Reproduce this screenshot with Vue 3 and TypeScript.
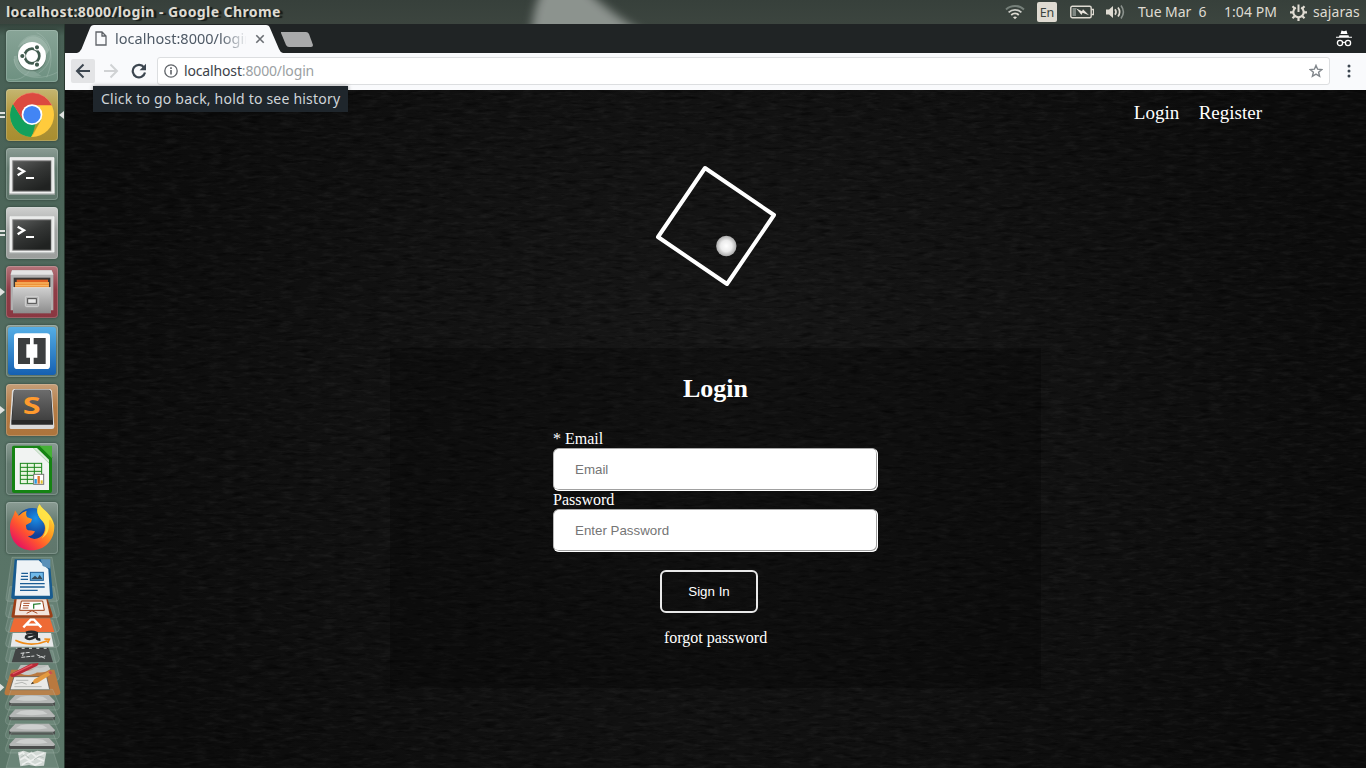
<script setup lang="ts">
import { ref } from 'vue'

interface Field {
  id: string
  label: string
  placeholder: string
  type: string
}

const pageUrl = { host: 'localhost', rest: ':8000/login' }
const navLinks: string[] = ['Login', 'Register']
const fields: Field[] = [
  { id: 'email', label: '* Email', placeholder: 'Email', type: 'email' },
  { id: 'password', label: 'Password', placeholder: 'Enter Password', type: 'password' },
]
const values = ref<Record<string, string>>({ email: '', password: '' })
const drives: number[] = [0, 1, 2, 3]
</script>

<template>
  <div class="desktop">
    <header class="panel">
      <svg class="wallpaper" width="180" height="24" viewBox="0 0 180 24">
        <filter id="soft" x="-20%" y="-50%" width="140%" height="200%">
          <feGaussianBlur stdDeviation="5" />
        </filter>
        <path d="M44 -12C36 0 33 14 31 38H152C122 20 105 8 84 -12Z" fill="#8c938e" filter="url(#soft)" />
      </svg>
      <div class="panel-title">localhost:8000/login - Google Chrome</div>
      <div class="indicators">
        <svg class="wifi" width="20" height="16" viewBox="0 0 20 16" fill="none" stroke-width="1.8">
          <path d="M1 5.5C6 .8 14 .8 19 5.5" stroke="#76807a" />
          <path d="M3.6 8.4C7.4 5 12.6 5 16.4 8.4" stroke="#cfd0ca" />
          <path d="M6.2 11C8.5 9 11.5 9 13.8 11" stroke="#dfdbd2" />
          <path d="M8 13.2L10 15.2L12 13.2Q10 11.8 8 13.2Z" fill="#dfdbd2" />
        </svg>
        <span class="keyboard">En</span>
        <svg class="battery" width="24" height="14" viewBox="0 0 24 14">
          <rect x=".8" y="1.3" width="20.4" height="11.4" rx="1.5" fill="none" stroke="#dfdbd2" stroke-width="1.4" />
          <path d="M21.5 4.5h2v5h-2" fill="none" stroke="#dfdbd2" stroke-width="1.3" />
          <rect x="2.5" y="3" width="3.5" height="8" fill="#7f8782" />
          <path d="M6 3.2L12 6.3L13 4.2L19 10.2L12.6 7.8L11.5 9.9Z" fill="#e8e4dc" />
        </svg>
        <svg class="sound" width="20" height="16" viewBox="0 0 20 16" fill="none">
          <path d="M0 5.5h3L7 2v12L3 10.5H0Z" fill="#dfdbd2" />
          <path d="M9 5.3q2 2.7 0 5.4" stroke="#dfdbd2" stroke-width="1.7" />
          <path d="M12 3.5q3.3 4.5 0 9" stroke="#dfdbd2" stroke-width="1.7" />
          <path d="M15 1.5q4.800 6.500 0 13" stroke="#8a918c" stroke-width="1.6" />
        </svg>
        <span class="date">Tue Mar&nbsp; 6</span>
        <span class="time">1:04 PM</span>
        <svg class="gear" width="17" height="18" viewBox="0 0 17 18" fill="none" stroke="#dfdbd2">
          <path d="M5.8 4.6A5.2 5.2 0 1 0 11.2 4.6" stroke-width="2.1" />
          <path d="M8.5 1.5V9" stroke-width="2" />
          <path d="M0 9.3h3M14 9.3h3M2.5 3.2L4.8 5.5M14.5 3.2L12.2 5.5M2.5 15.3L4.8 13M14.5 15.3L12.2 13M8.5 15v3" stroke-width="2.2" />
        </svg>
        <span class="user">sajaras</span>
      </div>
    </header>

    <div class="workspace">
      <aside class="launcher">
        <div class="tile tile-dash">
          <svg viewBox="18 18 156 156">
            <g fill="none" stroke="#b9cdc2" stroke-opacity=".45" stroke-width="2">
              <path d="M55 70C72 25 130 20 150 75C155 105 143 130 115 148" />
              <path d="M42 105C48 160 112 175 172 145" />
              <path d="M110 26C155 45 164 105 140 160" />
              <path d="M22 165C55 172 75 160 90 138" />
            </g>
            <path d="M57 69C78 22 132 28 148 78L137 95C133 60 90 40 57 69Z" fill="#c9d9d0" opacity=".35" />
            <path d="M42 96C36 130 72 168 125 156L97 138C70 138 53 120 51 95Z" fill="#c9d9d0" opacity=".25" />
            <circle cx="96" cy="99" r="43" fill="#42594e" opacity=".4" />
            <circle cx="96" cy="96" r="42" fill="#fff" />
            <circle cx="96" cy="96" r="22" fill="none" stroke="#405a4e" stroke-width="8" />
            <g fill="#405a4e" stroke="#fff" stroke-width="3.5">
              <circle cx="67" cy="96" r="8" />
              <circle cx="111" cy="70" r="8" />
              <circle cx="111" cy="122" r="8" />
            </g>
          </svg>
        </div>
        <div class="tile tile-chrome">
          <i class="mark left double"></i>
          <i class="mark right"></i>
          <svg viewBox="18 195 156 156">
            <circle cx="96" cy="273" r="66" fill="#ffcb3c" />
            <path d="M39 240A66 66 0 0 0 93 339L124 286L96 272L68 286Z" fill="#12a05c" />
            <path d="M39 240A66 66 0 0 1 156 244H96L68 288Z" fill="#dc4a3f" />
            <path d="M39 240A66 66 0 0 1 156 244" fill="none" stroke="#f0867c" stroke-width="2" opacity=".7" />
            <path d="M96 339L124 287L106 300Z" fill="#d89b20" opacity=".7" />
            <circle cx="96" cy="272" r="31" fill="#fff" />
            <circle cx="96" cy="272" r="26" fill="#4285f4" />
          </svg>
        </div>
        <div v-for="n in 2" :key="n" class="tile" :class="n === 1 ? 'tile-plain' : 'tile-active'">
          <i v-if="n === 2" class="mark left double"></i>
          <svg viewBox="18 372 156 156">
            <defs>
              <linearGradient id="screen" x2=".6" y2="1">
                <stop offset="0" stop-color="#5a5c5b" />
                <stop offset=".5" stop-color="#353736" />
                <stop offset="1" stop-color="#202221" />
              </linearGradient>
            </defs>
            <path d="M31 399H161L165 512H27Z" fill="#a9adab" />
            <path d="M30 401H162V507H30Z" fill="#e8e9e8" stroke="#fff" stroke-width="2" />
            <rect x="37" y="409" width="117" height="94" fill="#777" />
            <rect x="40" y="412" width="112" height="88" fill="url(#screen)" />
            <path d="M53 431L72 442L53 454" fill="none" stroke="#fff" stroke-width="7" />
            <path d="M78 462H102" stroke="#fff" stroke-width="6" />
          </svg>
        </div>
        <div class="tile tile-files">
          <i class="mark left"></i>
          <svg viewBox="18 198 156 156">
            <defs>
              <linearGradient id="cabinet" x2="0" y2="1">
                <stop offset="0" stop-color="#d0d0d0" />
                <stop offset="1" stop-color="#8c8c8c" />
              </linearGradient>
            </defs>
            <path d="M36 211H155L160 222V331H32V222Z" fill="#b0b0b0" />
            <path d="M36 211H155L160 224H32Z" fill="#e4e4e4" />
            <rect x="41" y="233" width="110" height="34" fill="#3a3634" />
            <rect x="50" y="239" width="94" height="10" fill="#e05f22" />
            <rect x="45" y="246" width="102" height="22" fill="#ee9238" />
            <path d="M46 249H146M46 257H146" stroke="#ffd08a" stroke-width="2" />
            <rect x="39" y="262" width="114" height="78" fill="url(#cabinet)" />
            <path d="M39 263H153" stroke="#e9e9e9" stroke-width="2" />
            <rect x="76" y="289" width="40" height="31" rx="4" fill="#b5b5b5" stroke="#d8d8d8" stroke-width="2.5" />
            <rect x="83" y="296" width="26" height="14" fill="#e7e7e7" stroke="#4b4b4b" stroke-width="3" />
          </svg>
        </div>
        <div class="tile tile-plain">
          <svg viewBox="18 375 156 156">
            <defs>
              <linearGradient id="brackets" x2="0" y2="1">
                <stop offset="0" stop-color="#55aee5" />
                <stop offset="1" stop-color="#1560b2" />
              </linearGradient>
            </defs>
            <rect x="24" y="381" width="144" height="144" rx="9" fill="url(#brackets)" />
            <rect x="42" y="400" width="108" height="107" rx="10" fill="#fff" />
            <path d="M54 414H90V433H79V473H90V492H54ZM137 414H101V433H112V473H101V492H137Z" fill="#3c3e3f" />
          </svg>
        </div>
        <div class="tile tile-sublime">
          <i class="mark left"></i>
          <svg viewBox="18 12 156 156">
            <defs>
              <linearGradient id="key" x2="0" y2="1">
                <stop offset="0" stop-color="#6c6c6c" />
                <stop offset="1" stop-color="#404040" />
              </linearGradient>
            </defs>
            <path d="M41 27H151L156 32L163 140Q163 147 156 147H35Q28 147 29 140L36 32Z" fill="#dadada" />
            <path d="M45 29H148L153 34L159 125V134H34V125L41 34Z" fill="#292929" />
            <path d="M45 30H148L152 34L157 120H36L42 34Z" fill="url(#key)" />
            <text class="key-letter" transform="translate(95 101) scale(1.35 1)" text-anchor="middle">S</text>
          </svg>
        </div>
        <div class="tile tile-plain">
          <svg viewBox="18 189 156 156">
            <path d="M41 197H122L156 232V333Q156 339 150 339H42Q36 339 36 333V203Q36 197 41 197Z" fill="#158313" />
            <path d="M45 204H100L147 250V330H45Z" fill="#f1f3f2" />
            <path d="M118 197H156V235Z" fill="#45b136" />
            <path d="M100 204L147 250V239L111 204Z" fill="#dce9dc" />
            <rect x="61" y="250" width="64" height="61" fill="#e8f5df" stroke="#19841a" stroke-width="3" />
            <path d="M61 262H125M61 274H125M61 286H125M61 298H125M82 250V311M103 250V311" stroke="#19841a" stroke-width="3" />
            <rect x="101" y="283" width="30" height="30" fill="#fff" stroke="#777" stroke-width="3" />
            <path d="M107 311V297" stroke="#2b9be0" stroke-width="7" />
            <path d="M116 311V288" stroke="#e0732b" stroke-width="7" />
            <path d="M125 311V301" stroke="#e0c02b" stroke-width="6" />
          </svg>
        </div>
        <div class="tile tile-plain">
          <svg viewBox="18 366 156 156">
            <defs>
              <linearGradient id="fox" x1=".9" y1=".1" x2=".2" y2=".9">
                <stop offset="0" stop-color="#ffe33b" />
                <stop offset=".4" stop-color="#ff9a1f" />
                <stop offset=".7" stop-color="#ff5230" />
                <stop offset="1" stop-color="#e8175d" />
              </linearGradient>
              <radialGradient id="globe" cx=".6" cy=".3">
                <stop offset="0" stop-color="#1a90e8" />
                <stop offset="1" stop-color="#123f97" />
              </radialGradient>
            </defs>
            <circle cx="97" cy="435" r="51" fill="url(#globe)" />
            <path d="M45 391L56 407Q68 395 80 392Q76 404 82 412L96 417L93 427L78 435Q77 446 84 451Q94 451 105 454Q98 470 83 468Q99 483 120 472C139 459 139 433 125 421C108 401 109 386 119 373C124 388 157 401 163 436C164 483 133 511 96 511C51 510 29 477 30 440C31 417 42 410 45 391Z" fill="url(#fox)" />
            <path d="M119 373C124 388 157 401 160 436C155 416 145 411 147 431C148 455 139 466 125 476C145 447 137 433 125 421C108 401 109 386 119 373Z" fill="#ffe84a" opacity=".85" />
          </svg>
        </div>

        <svg class="folded" viewBox="0 0 195 654">
          <g stroke="#b7c7be" stroke-opacity=".4" stroke-width="2" fill="#b0c3b9" fill-opacity=".16">
            <path d="M36 22H156L176 145Q176 154 168 154H24Q17 153 18 145Z" />
            <path d="M30 110H162L178 190Q178 203 167 203H27Q16 202 17 190Z" />
            <path d="M34 165H158L178 235Q177 247 167 247H27Q16 246 17 235Z" />
            <path d="M34 210H158L178 280Q177 292 167 292H27Q16 291 17 280Z" />
            <path d="M34 252H158L178 326Q177 338 167 338H27Q16 337 17 326Z" />
            <path d="M34 302H158L178 380Q177 392 167 392H27Q16 391 17 380Z" />
          </g>
          <path d="M44 28H128L151 50L159 139Q159 147 152 147H40Q32 147 34 139Z" fill="#185b8f" />
          <path d="M51 31H116L145 58L150 137H44Z" fill="#eef3f6" />
          <path d="M122 28L151 28V56L128 48Z" fill="#5a90b8" />
          <path d="M64 70H84M63 79H84M62 88H84M60 101H134M60 111H134M60 121H113" stroke="#1c5d95" stroke-width="4" />
          <rect x="91" y="67" width="39" height="24" fill="#6fb9e9" stroke="#1c5d95" stroke-width="3" />
          <path d="M93 88L105 77L113 84L119 74L128 88Z" fill="#374955" />
          <path d="M43 148H143L158 195Q159 203 153 203H38Q33 203 35 195Z" fill="#9b3f17" />
          <path d="M50 148H139L149 196H44Z" fill="#f2e4dc" />
          <path d="M64 153H128L133 181H59Z" fill="#fff" stroke="#9b3f17" stroke-width="3" />
          <path d="M70 160H89M69 167H87M68 174H85M80 190L96 182L112 190" stroke="#a94a24" stroke-width="3" fill="none" />
          <path d="M101 176V163L122 161" stroke="#30833a" stroke-width="4" fill="none" />
          <path d="M42 205H150L163 246H29Z" fill="#ee6a35" />
          <path d="M70 232L92 209H102L124 232M78 224H115" fill="none" stroke="#fff" stroke-width="7" />
          <path d="M38 249H153L161 290H32Z" fill="#e7e9e9" />
          <path d="M78 248Q96 242 110 249V262Q111 270 121 268M109 254Q78 251 78 263Q88 273 108 258" fill="none" stroke="#25292b" stroke-width="8" />
          <path d="M46 271Q92 293 143 272M133 267L148 268L143 279" fill="none" stroke="#ef8c19" stroke-width="5" />
          <path d="M47 297H147L159 337H35Z" fill="#414444" />
          <path d="M49 295H146" stroke="#bbb" stroke-width="4" />
          <path d="M52 295H146" stroke="#333" stroke-width="4" stroke-dasharray="13 9" />
          <path d="M62 310L91 307M70 308L68 318M64 322L103 318M110 314L135 325M116 322L136 318" stroke="#d6d8d8" stroke-width="3" stroke-dasharray="12 3" />
          <path d="M62 345H145L157 388H35Z" fill="#b9bcba" />
          <path d="M34 359H163L181 427Q181 436 170 436H21Q12 435 14 425Z" fill="#b9793f" />
          <path d="M42 380H140L149 419H30Z" fill="#e9e9e6" stroke="#4a4e4c" stroke-width="2" />
          <path d="M62 364Q91 374 110 360Q132 364 147 351" stroke="#c6cac8" stroke-width="13" fill="none" />
          <path d="M31 373L92 341L116 339L112 347L43 380Q29 383 31 373Z" fill="#b82937" />
          <path d="M38 372L97 344" stroke="#e35a63" stroke-width="4" />
          <path d="M93 403L103 388L148 363L156 371L112 399Z" fill="#e39a3f" />
          <path d="M93 403L97 396L103 400Z" fill="#333" />
          <path d="M145 366L151 362L158 370L151 374Z" fill="#c95050" />
          <path d="M48 391H85M44 402L66 397L80 403M43 410H125" stroke="#9b9e9b" stroke-width="2" fill="none" />
          <g v-for="n in drives" :key="n" :transform="`translate(0 ${n * 43})`">
            <path d="M34 418H158L178 465Q179 480 169 480H25Q15 479 17 465Z" fill="#b0c3b9" fill-opacity=".12" stroke="#b7c7be" stroke-opacity=".4" stroke-width="2" />
            <path d="M46 436H147L165 456V465Q165 468 160 468H32Q27 468 27 463V456Z" fill="#494c4b" />
            <path d="M46 435H147L165 454Q165 459 160 459H31Q27 458 28 454Z" fill="#b4b6b5" />
            <path d="M62 440Q93 434 129 440L143 449Q95 456 47 449Z" fill="#cdcfce" />
          </g>
          <path d="M34 598H158L176 654H18Z" fill="#b0c3b9" fill-opacity=".2" stroke="#b7c7be" stroke-opacity=".4" stroke-width="2" />
          <path d="M54 607L71 602L92 609L112 602L139 607L132 647L108 649L87 645L61 649Z" fill="#d2d9d5" />
          <path d="M56 614L68 607L78 619L94 608L108 620L133 609M60 630L74 622L92 633L109 623L132 633M66 644L84 634L105 645L125 636" fill="none" stroke="#fff" stroke-width="5" opacity=".6" />
          <path d="M62 622L75 614L87 624M102 629L119 619L131 623M77 641L91 642" fill="none" stroke="#b5beba" stroke-width="3" />
          <path d="M0 401L13 412L0 424Z" fill="#dfe2df" />
        </svg>
      </aside>

      <main class="browser">
        <div class="tabstrip">
          <svg class="tab-shape" width="236" height="29" viewBox="0 0 236 29">
            <path d="M0 29Q3 28 4.5 25L13 4Q14 1 17 1H189Q192 1 193 4L202 25Q203 28 206 29Z" fill="#f9fafc" />
            <path d="M204 8H229Q231 8 232 10L236 21Q236 23 234 23H212Q210 23 209 21L204 9Z" fill="#a9aaab" />
          </svg>
          <div class="tab">
            <svg width="12" height="15" viewBox="0 0 12 15" fill="none" stroke="#5f6368" stroke-width="1.3">
              <path d="M1 1H7L11 5V14H1ZM7 1V5H11" />
            </svg>
            <span class="tab-title">localhost:8000/login</span>
            <svg class="close" width="10" height="10" viewBox="0 0 10 10" stroke="#6a6e73" stroke-width="1.6">
              <path d="M1.3 1.3L8.7 8.7M8.7 1.3L1.3 8.7" />
            </svg>
          </div>
          <svg class="incognito" width="16" height="17" viewBox="0 0 16 17" fill="none" stroke="#fff">
            <path d="M4.5 4L5.5 .5L8 1.2L10.5 .5L11.5 4Z" fill="#fff" stroke="none" />
            <path d="M3.5 5.3H12.5L13 6.7H16V7.8H0V6.7H3Z" fill="#fff" stroke="none" />
            <circle cx="4" cy="13" r="2.6" stroke-width="1.3" />
            <circle cx="12" cy="13" r="2.6" stroke-width="1.3" />
            <path d="M6.6 12.6Q8 11.9 9.4 12.6" stroke-width="1.2" />
          </svg>
        </div>

        <div class="toolbar">
          <span class="tool back">
            <svg width="16" height="16" viewBox="0 0 16 16" fill="none" stroke="#3c4650" stroke-width="2">
              <path d="M15 8H2.5M8.5 1.5L2 8L8.5 14.5" />
            </svg>
          </span>
          <svg class="forward" width="16" height="16" viewBox="0 0 16 16" fill="none" stroke="#d0d2d4" stroke-width="2">
            <path d="M1 8H13.5M7.5 1.5L14 8L7.5 14.5" />
          </svg>
          <svg class="reload" width="16" height="16" viewBox="0 0 16 16" fill="none">
            <path d="M13 4.5A6.2 6.2 0 1 0 14 9.5" stroke="#3c4650" stroke-width="2.2" />
            <path d="M15 .8V7.2H8.6Z" fill="#3c4650" />
          </svg>
          <div class="omnibox">
            <svg width="14" height="14" viewBox="0 0 14 14" fill="none" stroke="#5f6368">
              <circle cx="7" cy="7" r="6.2" stroke-width="1.3" />
              <path d="M7 6V10.5M7 3.3V4.9" stroke-width="1.6" />
            </svg>
            <span class="url">{{ pageUrl.host }}<span class="rest">{{ pageUrl.rest }}</span></span>
            <svg class="star" width="14" height="14" viewBox="0 0 14 14" fill="none" stroke="#80868b" stroke-width="1.4">
              <path d="M7 1.4L8.6 5.2L12.8 5.5L9.6 8.2L10.6 12.3L7 10.1L3.4 12.3L4.4 8.2L1.2 5.5L5.4 5.2Z" />
            </svg>
          </div>
          <svg class="menu" width="4" height="14" viewBox="0 0 4 14" fill="#3c4650">
            <circle cx="2" cy="2" r="1.5" />
            <circle cx="2" cy="7" r="1.5" />
            <circle cx="2" cy="12" r="1.5" />
          </svg>
          <div class="tooltip">Click to go back, hold to see history</div>
        </div>

        <section class="page">
          <svg class="leather" width="1301" height="678">
            <filter id="grain" x="0" y="0" width="100%" height="100%" color-interpolation-filters="sRGB">
              <feTurbulence type="fractalNoise" baseFrequency=".07 .28" numOctaves="3" seed="8" />
              <feColorMatrix values="0 0 0 0 .45  0 0 0 0 .45  0 0 0 0 .45  .25 0 0 0 -.12" />
            </filter>
            <filter id="creases" x="0" y="0" width="100%" height="100%" color-interpolation-filters="sRGB">
              <feTurbulence type="fractalNoise" baseFrequency=".06 .3" numOctaves="3" seed="21" />
              <feColorMatrix values="0 0 0 0 0  0 0 0 0 0  0 0 0 0 0  1.3 0 0 0 -.65" />
            </filter>
            <rect width="1301" height="678" filter="url(#grain)" />
            <rect width="1301" height="678" filter="url(#creases)" />
          </svg>
          <nav class="nav">
            <a v-for="link in navLinks" :key="link">{{ link }}</a>
          </nav>
          <svg class="logo" width="124" height="124" viewBox="0 0 124 124">
            <defs>
              <radialGradient id="ball">
                <stop offset="0" stop-color="#fff" />
                <stop offset=".55" stop-color="#ececec" />
                <stop offset="1" stop-color="#a9a9a9" />
              </radialGradient>
            </defs>
            <path d="M51 4L120 51L73 120L4 73Z" fill="none" stroke="#fff" stroke-width="4" stroke-linejoin="round" />
            <circle cx="72.3" cy="82" r="10.2" fill="url(#ball)" />
          </svg>
          <form class="card" @submit.prevent>
            <h2>Login</h2>
            <div class="fields">
              <template v-for="f in fields" :key="f.id">
                <label :for="f.id">{{ f.label }}</label>
                <input :id="f.id" v-model="values[f.id]" :type="f.type" :placeholder="f.placeholder" />
              </template>
            </div>
            <button type="submit">Sign In</button>
            <a class="forgot">forgot password</a>
          </form>
        </section>
      </main>
    </div>
  </div>
</template>

<style>
body {
  margin: 0;
  overflow: hidden;
}
</style>

<style scoped>
.desktop {
  width: 1366px;
  height: 768px;
  display: flex;
  flex-direction: column;
  overflow: hidden;
  background: #000;
  font-family: "Noto Sans", "Open Sans", sans-serif;
}
.panel {
  position: relative;
  height: 24px;
  flex: none;
  display: flex;
  align-items: center;
  justify-content: space-between;
  padding: 0 5px 0 6px;
  box-sizing: border-box;
  color: #dfdbd2;
  background: linear-gradient(#37403b, #3c453f);
}
.wallpaper {
  position: absolute;
  left: 500px;
  top: 0;
}
.panel-title {
  position: relative;
  font-weight: 700;
  font-size: 14px;
  line-height: 24px;
  letter-spacing: .42px;
  white-space: nowrap;
  text-shadow: 3px 1px 1px #161b18;
}
.indicators {
  position: relative;
  display: flex;
  align-items: center;
  height: 24px;
  font-size: 14px;
  line-height: 24px;
  white-space: nowrap;
}
.keyboard {
  width: 20px;
  height: 20px;
  margin-left: 12px;
  border-radius: 2px;
  background: #dfdbd2;
  color: #3c453f;
  font-size: 12.5px;
  line-height: 21px;
  text-align: center;
}
.battery { margin-left: 13px; }
.sound { margin-left: 12px; }
.date { margin-left: 12px; width: 86px; letter-spacing: -.05px; }
.time { width: 66px; letter-spacing: .05px; }
.user { margin-left: 6px; width: 48px; letter-spacing: .1px; }
.workspace {
  display: flex;
  flex: 1;
  min-height: 0;
}
.launcher {
  width: 65px;
  box-sizing: border-box;
  flex: none;
  display: flex;
  flex-direction: column;
  align-items: flex-start;
  gap: 7px;
  padding: 6px 0 0 6px;
  border-right: 1px solid #28382f;
  background: linear-gradient(#33423b 0, #486055 12px, #4c6559 180px, #587366 450px, #5b7668 744px);
}
.tile {
  position: relative;
  flex: none;
  width: 52px;
  height: 52px;
  box-sizing: border-box;
  border-radius: 4px;
  box-shadow: 0 0 2px 1px rgba(25, 40, 32, .3), inset 0 0 0 1px rgba(225, 235, 230, .22);
}
.tile svg {
  display: block;
  width: 52px;
  height: 52px;
}
.tile-dash { background: linear-gradient(#88a497, #6d9080); }
.tile-chrome { background: linear-gradient(#c5b671, #b1963a 50%, #a88d30); }
.tile-plain { background: linear-gradient(#8b9c94, #647b70 40%, #5f766b); }
.tile-active { background: linear-gradient(#d0d1d0, #a3a5a4 45%, #9b9e9c); }
.tile-files { background: linear-gradient(#b4747a, #8f3c46 45%, #8a3741); }
.tile-sublime { background: linear-gradient(#c59e78, #b57c45 45%, #ad743c); }
.mark {
  position: absolute;
  top: 50%;
  width: 0;
  height: 0;
  border: 4px solid transparent;
  transform: translateY(-50%);
}
.mark.left { left: -6px; border-left: 5px solid #dfe2df; border-right: 0; }
.mark.right { right: -6px; border-right: 5px solid #dfe2df; border-left: 0; }
.mark.double {
  width: 5px;
  height: 2px;
  border: solid #dfe2df;
  border-width: 2px 0;
}
.key-letter {
  font: 700 72px "Open Sans", "Noto Sans", sans-serif;
  fill: #ff9a2e;
}
.folded {
  width: 65px;
  height: 218px;
  flex: none;
  margin: -11px 0 0 -6px;
}
.browser {
  flex: 1;
  min-width: 0;
  display: flex;
  flex-direction: column;
}
.tabstrip {
  position: relative;
  height: 29px;
  flex: none;
  display: flex;
  align-items: center;
  justify-content: space-between;
  padding: 0 14px 0 30px;
  background: #202425;
}
.tab-shape {
  position: absolute;
  left: 12px;
  top: 0;
}
.tab {
  position: relative;
  display: flex;
  align-items: center;
  width: 170px;
}
.tab-title {
  width: 131px;
  margin: -2px 0 0 8px;
  overflow: hidden;
  white-space: nowrap;
  font-size: 14.5px;
  line-height: 20px;
  letter-spacing: .02px;
  color: #4f5a66;
  -webkit-mask-image: linear-gradient(90deg, #000 105px, transparent 133px);
  mask-image: linear-gradient(90deg, #000 105px, transparent 133px);
}
.close { margin-left: 9px; }
.toolbar {
  position: relative;
  height: 37px;
  flex: none;
  box-sizing: border-box;
  display: flex;
  align-items: center;
  padding: 0 15px 1px 6px;
  background: #f9fafc;
}
.tool {
  width: 24px;
  height: 24px;
  display: flex;
  align-items: center;
  justify-content: center;
  border-radius: 2px;
  background: #e3e4e6;
}
.forward { margin-left: 8px; }
.reload { margin-left: 12px; }
.omnibox {
  width: 1173px;
  height: 28px;
  flex: none;
  box-sizing: border-box;
  margin-left: 10px;
  padding: 0 6px;
  display: flex;
  align-items: center;
  border: 1px solid #dcdee0;
  border-radius: 3px;
  background: #fff;
}
.url {
  flex: 1;
  margin-left: 6px;
  font-size: 14px;
  line-height: 20px;
  letter-spacing: -.15px;
  color: #3c4249;
}
.rest { color: #9b9fa3; }
.menu { margin-left: 17px; }
.tooltip {
  position: absolute;
  z-index: 3;
  left: 28px;
  top: 33px;
  width: 255px;
  height: 26px;
  box-sizing: border-box;
  padding-left: 8px;
  background: #1f262c;
  box-shadow: 0 0 4px rgba(0, 0, 0, .4);
  color: #cfd5d9;
  font-size: 14px;
  line-height: 25px;
  letter-spacing: .21px;
  white-space: nowrap;
}
.page {
  position: relative;
  flex: 1;
  min-height: 0;
  overflow: hidden;
  display: flex;
  flex-direction: column;
  align-items: center;
  background: radial-gradient(ellipse 640px 580px at 50% 45%, #171717, #121212 50%, #0c0c0c 100%);
  color: #fff;
  font-family: "Liberation Serif", "Times New Roman", serif;
}
.leather {
  position: absolute;
  left: 0;
  top: 0;
}
.nav {
  position: relative;
  align-self: stretch;
  height: 46px;
  box-sizing: border-box;
  padding: 12px 104px 0 0;
  display: flex;
  justify-content: flex-end;
  gap: 19.5px;
  font-size: 19px;
  line-height: 22px;
}
.logo {
  position: relative;
  margin-top: 28px;
}
.card {
  position: relative;
  width: 651px;
  height: 340px;
  margin: 60px 0 0;
  display: flex;
  flex-direction: column;
  align-items: center;
  background: rgba(0, 0, 0, .25);
  font-size: 16px;
}
.card h2 {
  margin: 26px 0 26px;
  font-size: 26px;
  line-height: 30px;
}
.fields {
  width: 325px;
  display: flex;
  flex-direction: column;
}
.fields label {
  height: 18px;
  line-height: 18px;
}
.fields input {
  width: 325px;
  height: 43px;
  box-sizing: border-box;
  padding: 0 21px;
  border: 1px solid;
  border-color: #a8a8a8 #fff #fff #b8b8b8;
  border-radius: 6px;
  background: #fff;
  box-shadow: inset -1px -1px 0 #a0a0a0;
  font: 13.333px "Liberation Sans", Arial, sans-serif;
}
.fields input::placeholder { color: #757575; }
.card button {
  width: 98px;
  height: 43px;
  margin: 18px 13px 0 0;
  padding: 0;
  border: 2px solid #e9e9e9;
  border-radius: 6px;
  background: transparent;
  color: #fff;
  font: 13.333px "Liberation Sans", Arial, sans-serif;
}
.forgot {
  margin-top: 16px;
  line-height: 18px;
}
</style>
